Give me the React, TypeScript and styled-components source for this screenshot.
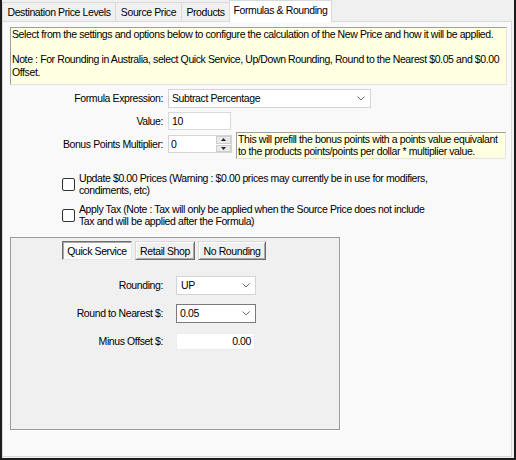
import React from "react";
import styled, { createGlobalStyle, css } from "styled-components";

const GlobalStyle = createGlobalStyle`
  html, body { margin: 0; padding: 0; background: #f0f0f0; }
  body {
    font-family: "Liberation Sans", Arial, sans-serif;
    font-size: 10.5px;
    letter-spacing: -0.4px;
    color: #000;
  }
`;

const Window = styled.div`
  width: 516px;
  height: 460px;
  box-sizing: border-box;
  border: 2px solid #1b1b1b;
  border-top: 0;
  background: #f0f0f0;
  display: flex;
  flex-direction: column;
  padding: 0 2px 1px 0;
`;

const TabStrip = styled.div`
  display: flex;
  align-items: flex-end;
  height: 21px;
  flex-shrink: 0;
  position: relative;
  z-index: 1;
`;

const Tab = styled.div<{ $w: number; $active?: boolean }>`
  box-sizing: border-box;
  width: ${(p) => p.$w}px;
  height: ${(p) => (p.$active ? 22 : 19)}px;
  margin-left: -1px;
  &:first-child { margin-left: 0; }
  border: 1px solid #d9d9d9;
  border-bottom: none;
  background: ${(p) => (p.$active ? "#ffffff" : "#f0f0f0")};
  margin-bottom: ${(p) => (p.$active ? -1 : 0)}px;
  padding-bottom: ${(p) => (p.$active ? 3 : 0)}px;
  display: flex;
  align-items: center;
  justify-content: center;
  white-space: nowrap;
`;

const Panel = styled.div`
  flex: 1;
  box-sizing: border-box;
  background: #f9f9f9;
  border: 1px solid #d9d9d9;
  padding: 5px 0 0 7px;
  display: flex;
  flex-direction: column;
  align-items: flex-start;
`;

const InfoBox = styled.div`
  width: 497px;
  height: 58px;
  box-sizing: border-box;
  background: #ffffe1;
  border: 1px solid;
  border-color: #a0a0a0 #e3e3e3 #e3e3e3 #a0a0a0;
  padding: 0 0 0 1px;
  line-height: 12.5px;
  white-space: nowrap;
`;

const FormRows = styled.div<{ $top: number; $gap: number }>`
  margin-top: ${(p) => p.$top}px;
  display: flex;
  flex-direction: column;
  gap: ${(p) => p.$gap}px;
`;

const FieldRow = styled.div<{ $h: number }>`
  display: flex;
  align-items: center;
  height: ${(p) => p.$h}px;
`;

const FieldLabel = styled.div<{ $w: number; $gap: number }>`
  flex: 0 0 ${(p) => p.$w}px;
  margin-right: ${(p) => p.$gap}px;
  text-align: right;
  white-space: nowrap;
`;

const ComboBox = styled.div<{ $w: number; $h: number; $focused?: boolean }>`
  box-sizing: border-box;
  width: ${(p) => p.$w}px;
  height: ${(p) => p.$h}px;
  border: 1px solid ${(p) => (p.$focused ? "#7a7a7a" : "#d4d4d4")};
  background: #ffffff;
  display: flex;
  align-items: center;
  justify-content: space-between;
  padding: 0 5px 0 3px;
  white-space: nowrap;
`;

const TextBox = styled.div<{ $w: number; $h: number; $right?: boolean; $soft?: boolean }>`
  box-sizing: border-box;
  width: ${(p) => p.$w}px;
  height: ${(p) => p.$h}px;
  border: 1px solid ${(p) => (p.$soft ? "#ececec" : "#d9d9d9")};
  background: #ffffff;
  display: flex;
  align-items: center;
  justify-content: ${(p) => (p.$right ? "flex-end" : "flex-start")};
  padding: ${(p) => (p.$right ? "0 3px 0 0" : "0 0 0 3px")};
`;

const NumericBox = styled.div`
  box-sizing: border-box;
  width: 64px;
  height: 18px;
  border: 1px solid #d4d4d4;
  background: #ffffff;
  display: flex;
`;

const NumericValue = styled.div`
  flex: 1;
  display: flex;
  align-items: center;
  padding-left: 2px;
`;

const SpinButtons = styled.div`
  width: 15px;
  display: flex;
  flex-direction: column;
  gap: 1px;
  padding: 0 0 0 1px;
`;

const SpinButton = styled.div`
  flex: 1;
  background: #eaeaea;
  border: 1px solid #cdcdcd;
  display: flex;
  align-items: center;
  justify-content: center;
`;

const HintBox = styled.div`
  box-sizing: border-box;
  width: 270px;
  height: 27px;
  margin-left: 4px;
  margin-top: 3px;
  background: #ffffe1;
  border: 1px solid;
  border-color: #a0a0a0 #e3e3e3 #e3e3e3 #a0a0a0;
  padding: 1px 0 0 1px;
  line-height: 11.5px;
  white-space: nowrap;
`;

const CheckList = styled.div`
  margin-top: 19px;
  margin-left: 52px;
  display: flex;
  flex-direction: column;
  gap: 7px;
`;

const CheckRow = styled.label`
  display: flex;
  align-items: center;
  gap: 4px;
`;

const CheckBox = styled.span`
  flex-shrink: 0;
  width: 13px;
  height: 13px;
  box-sizing: border-box;
  border: 1px solid #333333;
  border-radius: 2px;
  background: #ffffff;
`;

const CheckText = styled.span`
  line-height: 12px;
  white-space: nowrap;
`;

const GroupPanel = styled.div`
  margin-top: 10px;
  width: 330px;
  height: 193px;
  box-sizing: border-box;
  border: 1px solid #9a9a9a;
  box-shadow: 1px 1px 0 #ffffff;
  background: #f0f0f0;
  padding-top: 3px;
`;

const ButtonTabs = styled.div`
  display: flex;
  gap: 3px;
  margin-left: 51px;
`;

const ToggleButton = styled.div<{ $w: number; $pressed?: boolean }>`
  box-sizing: border-box;
  width: ${(p) => p.$w}px;
  height: 19px;
  display: flex;
  align-items: center;
  justify-content: center;
  white-space: nowrap;
  border: 1px solid;
  ${(p) =>
    p.$pressed
      ? css`
          background: #fbfbfb;
          border-color: #6e6e6e #e6e6e6 #e6e6e6 #6e6e6e;
          box-shadow: inset 1px 1px 0 #a8a8a8;
        `
      : css`
          background: #f0f0f0;
          border-color: #d8d8d8 #6e6e6e #6e6e6e #d8d8d8;
          box-shadow: inset 1px 1px 0 #ffffff, inset -1px -1px 0 #a8a8a8;
        `}
`;

const Chevron = () => (
  <svg width="8" height="5" viewBox="0 0 8 5" aria-hidden="true">
    <polyline points="0.5,0.5 4,4 7.5,0.5" fill="none" stroke="#6d6d6d" strokeWidth="1" />
  </svg>
);

const Arrow = ({ up }: { up?: boolean }) => (
  <svg width="5" height="3" viewBox="0 0 5 3" aria-hidden="true">
    <polygon points={up ? "0,3 2.5,0 5,3" : "0,0 2.5,3 5,0"} fill="#222" />
  </svg>
);

export default function App() {
  return (
    <>
      <GlobalStyle />
      <Window>
        <TabStrip>
          <Tab $w={114}>Destination Price Levels</Tab>
          <Tab $w={67}>Source Price</Tab>
          <Tab $w={49}>Products</Tab>
          <Tab $w={103} $active>
            Formulas &amp; Rounding
          </Tab>
        </TabStrip>
        <Panel>
          <InfoBox>
            Select from the settings and options below to configure the calculation of the New Price and how it will be applied.
            <br />
            <br />
            Note : For Rounding in Australia, select Quick Service, Up/Down Rounding, Round to the Nearest $0.05 and $0.00
            <br />
            Offset.
          </InfoBox>

          <FormRows $top={4} $gap={5}>
            <FieldRow $h={18}>
              <FieldLabel $w={153} $gap={5}>Formula Expression:</FieldLabel>
              <ComboBox $w={203} $h={19}>
                <span>Subtract Percentage</span>
                <Chevron />
              </ComboBox>
            </FieldRow>
            <FieldRow $h={18}>
              <FieldLabel $w={153} $gap={5}>Value:</FieldLabel>
              <TextBox $w={63} $h={18}>10</TextBox>
            </FieldRow>
            <FieldRow $h={18}>
              <FieldLabel $w={153} $gap={5}>Bonus Points Multiplier:</FieldLabel>
              <NumericBox>
                <NumericValue>0</NumericValue>
                <SpinButtons>
                  <SpinButton>
                    <Arrow up />
                  </SpinButton>
                  <SpinButton>
                    <Arrow />
                  </SpinButton>
                </SpinButtons>
              </NumericBox>
              <HintBox>
                This will prefill the bonus points with a points value equivalant
                <br />
                to the products points/points per dollar * multiplier value.
              </HintBox>
            </FieldRow>
          </FormRows>

          <CheckList>
            <CheckRow>
              <CheckBox />
              <CheckText>
                Update $0.00 Prices (Warning : $0.00 prices may currently be in use for modifiers,
                <br />
                condiments, etc)
              </CheckText>
            </CheckRow>
            <CheckRow>
              <CheckBox />
              <CheckText>
                Apply Tax (Note : Tax will only be applied when the Source Price does not include
                <br />
                Tax and will be applied after the Formula)
              </CheckText>
            </CheckRow>
          </CheckList>

          <GroupPanel>
            <ButtonTabs>
              <ToggleButton $w={70} $pressed>Quick Service</ToggleButton>
              <ToggleButton $w={60}>Retail Shop</ToggleButton>
              <ToggleButton $w={68}>No Rounding</ToggleButton>
            </ButtonTabs>
            <FormRows $top={16} $gap={10}>
              <FieldRow $h={18}>
                <FieldLabel $w={152} $gap={13}>Rounding:</FieldLabel>
                <ComboBox $w={80} $h={19}>
                  <span style={{ paddingLeft: 1 }}>UP</span>
                  <Chevron />
                </ComboBox>
              </FieldRow>
              <FieldRow $h={18}>
                <FieldLabel $w={152} $gap={13}>Round to Nearest $:</FieldLabel>
                <ComboBox $w={80} $h={19} $focused>
                  <span>0.05</span>
                  <Chevron />
                </ComboBox>
              </FieldRow>
              <FieldRow $h={18}>
                <FieldLabel $w={152} $gap={13}>Minus Offset $:</FieldLabel>
                <TextBox $w={79} $h={17} $right $soft>0.00</TextBox>
              </FieldRow>
            </FormRows>
          </GroupPanel>
        </Panel>
      </Window>
    </>
  );
}
